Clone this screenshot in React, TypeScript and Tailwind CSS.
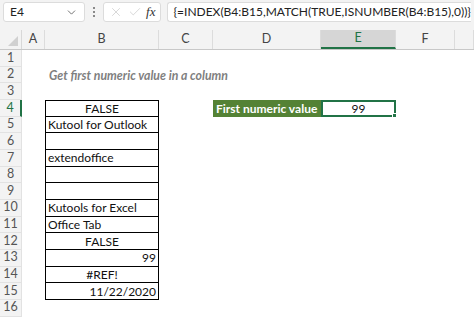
import { ChevronDown, X, Check } from 'lucide-react'

const cols = [
  { name: 'A', w: 'w-[23px]' },
  { name: 'B', w: 'w-[114px]' },
  { name: 'C', w: 'w-[54px]' },
  { name: 'D', w: 'w-[108px]' },
  { name: 'E', w: 'w-[75px]' },
  { name: 'F', w: 'w-[59px]' },
  { name: '', w: 'flex-1' },
]

type BCell = { text: string; align: 'left' | 'center' | 'right' }

const bValues: Record<number, BCell> = {
  4: { text: 'FALSE', align: 'center' },
  5: { text: 'Kutool for Outlook', align: 'left' },
  6: { text: '', align: 'left' },
  7: { text: 'extendoffice', align: 'left' },
  8: { text: '', align: 'left' },
  9: { text: '', align: 'left' },
  10: { text: 'Kutools for Excel', align: 'left' },
  11: { text: 'Office Tab', align: 'left' },
  12: { text: 'FALSE', align: 'center' },
  13: { text: '99', align: 'right' },
  14: { text: '#REF!', align: 'center' },
  15: { text: '11/22/2020', align: 'right' },
}

const alignClass = {
  left: 'justify-start pl-[2px]',
  center: 'justify-center',
  right: 'justify-end pr-[2px]',
}

function FormulaBar() {
  return (
    <div className="flex h-[30px] items-start gap-[6px] bg-[#f3f3f3] px-[3px] pt-[2px]">
      <div className="flex h-[20px] w-[88px] items-center justify-between rounded-[3px] border border-[#dcdcdc] bg-white pl-[6px] pr-[6px] text-[12px] text-[#222]">
        <span>E4</span>
        <ChevronDown size={13} strokeWidth={1.5} className="text-[#555]" />
      </div>
      <div className="flex h-[20px] flex-col items-center justify-center gap-[2px] px-[2px]">
        <span className="h-[2px] w-[2px] rounded-full bg-[#666]" />
        <span className="h-[2px] w-[2px] rounded-full bg-[#666]" />
        <span className="h-[2px] w-[2px] rounded-full bg-[#666]" />
      </div>
      <div className="flex h-[20px] w-[62px] items-center justify-between rounded-[3px] border border-[#dcdcdc] bg-white px-[5px]">
        <X size={14} strokeWidth={1} className="text-[#bbb]" />
        <Check size={14} strokeWidth={1} className="text-[#bbb]" />
        <span className="font-['Liberation_Serif',serif] text-[13px] italic text-[#333]">fx</span>
      </div>
      <div className="flex h-[20px] flex-1 items-center rounded-l-[3px] border border-r-0 border-[#dcdcdc] bg-white pl-[5px] text-[12px] whitespace-nowrap text-[#222]">
        {'{=INDEX(B4:B15,MATCH(TRUE,ISNUMBER(B4:B15),0))}'}
      </div>
    </div>
  )
}

function HeaderRow() {
  return (
    <div className="flex h-[20px] border-b border-[#c8c8c8] bg-[#f3f3f3] text-[12.5px] text-[#444]">
      <div className="relative w-[22px] border-r border-[#d8d8d8]">
        <svg className="absolute right-[3px] bottom-[3px]" width="10" height="10" viewBox="0 0 10 10">
          <polygon points="10,0 10,10 0,10" fill="#d0d0d0" />
        </svg>
      </div>
      {cols.map((c) => (
        <div
          key={c.name}
          className={`${c.w} flex items-center justify-center border-r border-[#dcdcdc] ${
            c.name === 'E' ? 'border-b-2 border-b-[#217346] bg-[#d6d6d6] text-[#217346]' : ''
          }`}
        >
          {c.name}
        </div>
      ))}
    </div>
  )
}

function Row({ n }: { n: number }) {
  const b = bValues[n]
  return (
    <div className="flex h-[16.67px] text-[12px] leading-none text-[#111]">
      <div
        className={`flex w-[22px] items-center justify-center border-r border-b border-[#e2e2e2] bg-[#f3f3f3] text-[12.5px] text-[#555] ${
          n === 4 ? 'border-r-2 border-r-[#217346] bg-[#d6d6d6] text-[#217346]' : ''
        }`}
      >
        {n}
      </div>
      <div className="w-[23px]" />
      <div
        className={`flex w-[114px] items-center pt-[1px] ${
          b ? `border-x border-b border-black ${n === 4 ? 'border-t' : ''} ${alignClass[b.align]}` : ''
        }`}
      >
        {b?.text}
      </div>
      {n === 2 ? (
        <div className="relative w-[54px]">
          <span className="absolute top-[3px] left-[-110px] text-[12.3px] font-bold whitespace-nowrap text-[#7f7f7f] italic">
            Get first numeric value in a column
          </span>
        </div>
      ) : (
        <div className="w-[54px]" />
      )}
      {n === 4 ? (
        <>
          <div className="flex w-[108px] items-center bg-[#548235] pt-[1px] pl-[3px] font-bold whitespace-nowrap text-white">
            First numeric value
          </div>
          <div className="relative flex w-[75px] items-center justify-center border-2 border-[#217346] pt-[1px]">
            99
            <span className="absolute right-[-3px] bottom-[-3px] h-[5px] w-[5px] border border-white bg-[#217346]" />
          </div>
        </>
      ) : (
        <>
          <div className="w-[108px]" />
          <div className="w-[75px]" />
        </>
      )}
    </div>
  )
}

export default function App() {
  return (
    <div className="h-[318px] w-[474px] overflow-hidden bg-white font-['Lato',sans-serif]">
      <FormulaBar />
      <HeaderRow />
      {Array.from({ length: 16 }, (_, i) => (
        <Row key={i} n={i + 1} />
      ))}
    </div>
  )
}
